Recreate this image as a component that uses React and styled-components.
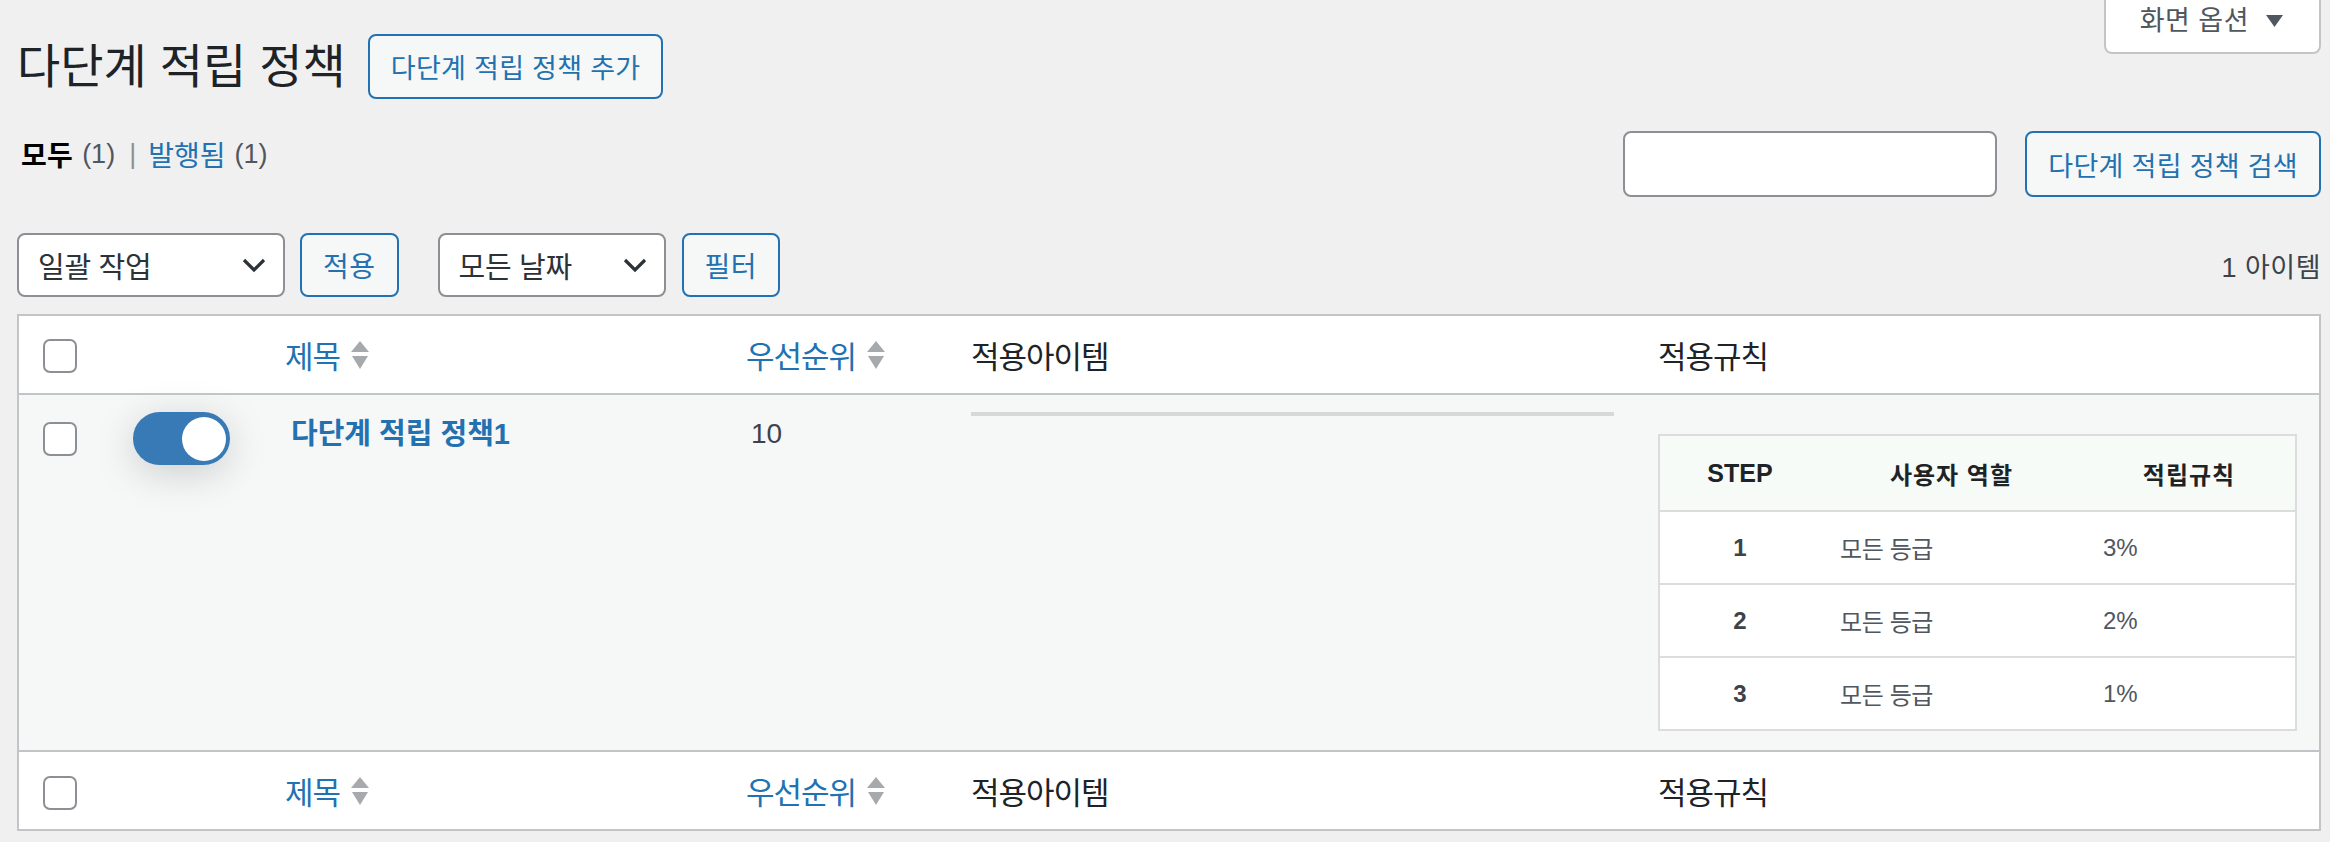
import React from "react";
import styled, { createGlobalStyle } from "styled-components";

const Global = createGlobalStyle`
  html, body { margin: 0; padding: 0; background: #f0f0f1; }
  body {
    font-family: "Liberation Sans", "Noto Sans CJK KR", sans-serif;
    color: #3c434a;
  }
  * { box-sizing: border-box; }
`;

const Page = styled.div`
  padding: 0 9px 0 17px;
`;

const TopRow = styled.div`
  display: flex;
  justify-content: space-between;
  align-items: flex-start;
`;

const TitleGroup = styled.div`
  display: flex;
  align-items: center;
  gap: 22px;
  margin-top: 34px;
`;

const Title = styled.h1`
  margin: 0;
  font-size: 47px;
  font-weight: 400;
  line-height: 65px;
  letter-spacing: 0;
  color: #1d2327;
`;

const OutlineButton = styled.button`
  display: inline-flex;
  align-items: center;
  justify-content: center;
  height: ${(p) => p.$h || 64}px;
  padding: 0 ${(p) => p.$px || 21}px;
  border: 2px solid #2271b1;
  border-radius: 8px;
  background: #f6f7f7;
  color: #2271b1;
  font-family: inherit;
  font-size: ${(p) => p.$fs || 28}px;
  letter-spacing: ${(p) => p.$ls ?? 0.5}px;
  margin-left: ${(p) => p.$ml || 0}px;
  cursor: pointer;
`;

const ScreenOptions = styled.button`
  display: flex;
  align-items: flex-start;
  gap: 17px;
  height: 54px;
  padding: 3px 36px 0 34px;
  border: 2px solid #c3c4c7;
  border-top: none;
  border-radius: 0 0 8px 8px;
  background: #fff;
  color: #50575e;
  font-family: inherit;
  font-size: 27px;
  line-height: 36px;
  letter-spacing: 0.5px;
`;

const ScreenArrow = styled.svg`
  margin-top: 12px;
  flex: none;
`;

const FilterRow = styled.div`
  display: flex;
  justify-content: space-between;
  align-items: flex-start;
  margin-top: 32px;
`;

const Subsubsub = styled.div`
  display: flex;
  align-items: center;
  height: 46px;
  padding-left: 4px;
  font-size: 28px;
  color: #50575e;
`;

const CurrentStatus = styled.span`
  font-weight: 700;
  color: #000;
  letter-spacing: 0.3px;
`;

const StatusLink = styled.span`
  color: #2271b1;
`;

const Count = styled.span`
  margin-left: 9px;
  font-size: 27px;
  color: #50575e;
`;

const Sep = styled.span`
  margin: 0 12px 0 14px;
  font-size: 27px;
  color: #8c8f94;
`;

const SearchBox = styled.div`
  display: flex;
  gap: 28px;
`;

const SearchInput = styled.div`
  width: 374px;
  height: 66px;
  border: 2px solid #8c8f94;
  border-radius: 8px;
  background: #fff;
`;

const TableNav = styled.div`
  display: flex;
  justify-content: space-between;
  align-items: center;
  margin-top: 36px;
  height: 64px;
`;

const Actions = styled.div`
  display: flex;
  align-items: center;
`;

const Select = styled.div`
  display: flex;
  align-items: center;
  justify-content: space-between;
  width: ${(p) => p.$w}px;
  height: 64px;
  padding: 0 17px 0 19px;
  margin-left: ${(p) => p.$ml || 0}px;
  border: 2px solid #8c8f94;
  border-radius: 8px;
  background: #fff;
  color: #2c3338;
  font-size: 29px;
  letter-spacing: -0.3px;
`;

const ItemCount = styled.div`
  font-size: 27px;
  letter-spacing: 0.5px;
  color: #3c434a;
`;

const ListTable = styled.table`
  margin-top: 17px;
  width: 100%;
  table-layout: fixed;
  border-collapse: collapse;
  border: 2px solid #c3c4c7;
  background: #fff;
`;

const Col = styled.col`
  width: ${(p) => (p.$w ? `${p.$w}px` : "auto")};
`;

const HeadCell = styled.th`
  height: 79px;
  padding: 0 0 0 ${(p) => p.$pl || 20}px;
  text-align: left;
  vertical-align: middle;
  font-weight: 400;
  font-size: 31px;
  letter-spacing: -1px;
  color: #1d2327;
  background: #fff;
  ${(p) => (p.$foot ? "border-top: 2px solid #c3c4c7;" : "border-bottom: 2px solid #c3c4c7;")}
`;

const SortLink = styled.span`
  display: inline-flex;
  align-items: center;
  gap: 11px;
  color: #2271b1;
`;

const Row = styled.tr`
  background: #f6f7f7;
`;

const Cell = styled.td`
  padding: 17px ${(p) => p.$pr || 0}px 19px ${(p) => p.$pl || 20}px;
  vertical-align: top;
`;

const Checkbox = styled.div`
  width: 34px;
  height: 34px;
  margin-top: ${(p) => p.$mt || 0}px;
  border: 2px solid #8c8f94;
  border-radius: 7px;
  background: #fff;
`;

const Toggle = styled.div`
  display: flex;
  align-items: center;
  justify-content: flex-end;
  width: 97px;
  height: 53px;
  padding: 0 4px;
  border-radius: 27px;
  background: #377ab6;
  box-shadow: 0 8px 40px rgba(0, 0, 0, 0.17);
`;

const Knob = styled.div`
  width: 44px;
  height: 44px;
  border-radius: 50%;
  background: #fff;
`;

const RowTitle = styled.a`
  display: block;
  padding-left: 3px;
  line-height: 44px;
  font-size: 29px;
  font-weight: 700;
  letter-spacing: 0;
  color: #2271b1;
  text-decoration: none;
`;

const PlainValue = styled.div`
  padding-left: 2px;
  line-height: 44px;
  font-size: 28px;
  color: #3c434a;
`;

const ItemsBar = styled.div`
  height: 4px;
  background: #d8d8d8;
`;

const RulesTable = styled.table`
  width: 100%;
  margin-top: 22px;
  border-collapse: collapse;
  table-layout: fixed;
  border: 2px solid #dcdcde;
  background: #fff;
  font-size: 24px;
`;

const RuleHead = styled.th`
  height: 76px;
  padding: 0;
  text-align: center;
  font-size: ${(p) => (p.$tight ? 24 : 25)}px;
  font-weight: 700;
  color: #1d2327;
  background: #f7fbf7;
  letter-spacing: ${(p) => (p.$tight ? "1px" : "0")};
  border-bottom: 2px solid #dcdcde;
`;

const RuleCell = styled.td`
  height: 73px;
  padding: 0 20px;
  border-top: 2px solid #dcdcde;
  text-align: ${(p) => (p.$center ? "center" : "left")};
  font-weight: ${(p) => (p.$bold ? 700 : 400)};
  color: ${(p) => (p.$bold ? "#3c434a" : "#50575e")};
  letter-spacing: ${(p) => (p.$tight ? "-0.4px" : "0")};
`;

const SortIcon = () => (
  <svg width="18" height="28" viewBox="0 0 18 28">
    <polygon points="0,11 9,0 18,11" fill="#a7aaad" />
    <polygon points="1,15 17,15 9,28" fill="#a7aaad" />
  </svg>
);

const Chevron = () => (
  <svg width="24" height="15" viewBox="0 0 24 15">
    <polyline points="2,2 12,12 22,2" fill="none" stroke="#2c3338" strokeWidth="3.2" />
  </svg>
);

const columns = (foot) => (
  <tr>
    <HeadCell $pl={24} $foot={foot}>
      <Checkbox $mt={foot ? 4 : 3} />
    </HeadCell>
    <HeadCell $foot={foot} />
    <HeadCell $pl={18} $foot={foot}>
      <SortLink>
        제목
        <SortIcon />
      </SortLink>
    </HeadCell>
    <HeadCell $pl={17} $foot={foot}>
      <SortLink>
        우선순위
        <SortIcon />
      </SortLink>
    </HeadCell>
    <HeadCell $foot={foot}>적용아이템</HeadCell>
    <HeadCell $foot={foot}>적용규칙</HeadCell>
  </tr>
);

const rules = [
  { step: 1, role: "모든 등급", rate: "3%" },
  { step: 2, role: "모든 등급", rate: "2%" },
  { step: 3, role: "모든 등급", rate: "1%" },
];

export default function App() {
  return (
    <>
      <Global />
      <Page>
        <TopRow>
          <TitleGroup>
            <Title>다단계 적립 정책</Title>
            <OutlineButton $h={65} $fs={27} $ls={0.3}>
              다단계 적립 정책 추가
            </OutlineButton>
          </TitleGroup>
          <ScreenOptions>
            화면 옵션
            <ScreenArrow width="17" height="12" viewBox="0 0 17 12">
              <polygon points="0,0 17,0 8.5,12" fill="#50575e" />
            </ScreenArrow>
          </ScreenOptions>
        </TopRow>

        <FilterRow>
          <Subsubsub>
            <CurrentStatus>모두</CurrentStatus>
            <Count>(1)</Count>
            <Sep>|</Sep>
            <StatusLink>발행됨</StatusLink>
            <Count>(1)</Count>
          </Subsubsub>
          <SearchBox>
            <SearchInput />
            <OutlineButton $h={66} $fs={27} $ls={0.3}>
              다단계 적립 정책 검색
            </OutlineButton>
          </SearchBox>
        </FilterRow>

        <TableNav>
          <Actions>
            <Select $w={268}>
              일괄 작업
              <Chevron />
            </Select>
            <OutlineButton $ml={15}>적용</OutlineButton>
            <Select $w={228} $ml={39}>
              모든 날짜
              <Chevron />
            </Select>
            <OutlineButton $ml={16}>필터</OutlineButton>
          </Actions>
          <ItemCount>1 아이템</ItemCount>
        </TableNav>

        <ListTable>
          <colgroup>
            <Col $w={93} />
            <Col $w={156} />
            <Col $w={462} />
            <Col $w={222} />
            <Col $w={687} />
            <Col />
          </colgroup>
          <thead>{columns(false)}</thead>
          <tbody>
            <Row>
              <Cell $pl={24}>
                <Checkbox $mt={10} />
              </Cell>
              <Cell $pl={22}>
                <Toggle>
                  <Knob />
                </Toggle>
              </Cell>
              <Cell $pl={21}>
                <RowTitle>다단계 적립 정책1</RowTitle>
              </Cell>
              <Cell>
                <PlainValue>10</PlainValue>
              </Cell>
              <Cell $pr={24}>
                <ItemsBar />
              </Cell>
              <Cell $pr={22}>
                <RulesTable>
                  <colgroup>
                    <Col $w={161} />
                    <Col $w={263} />
                    <Col />
                  </colgroup>
                  <thead>
                    <tr>
                      <RuleHead>STEP</RuleHead>
                      <RuleHead $tight>사용자 역할</RuleHead>
                      <RuleHead $tight>적립규칙</RuleHead>
                    </tr>
                  </thead>
                  <tbody>
                    {rules.map((r) => (
                      <tr key={r.step}>
                        <RuleCell $center $bold>
                          {r.step}
                        </RuleCell>
                        <RuleCell $tight>{r.role}</RuleCell>
                        <RuleCell>{r.rate}</RuleCell>
                      </tr>
                    ))}
                  </tbody>
                </RulesTable>
              </Cell>
            </Row>
          </tbody>
          <tfoot>{columns(true)}</tfoot>
        </ListTable>
      </Page>
    </>
  );
}
